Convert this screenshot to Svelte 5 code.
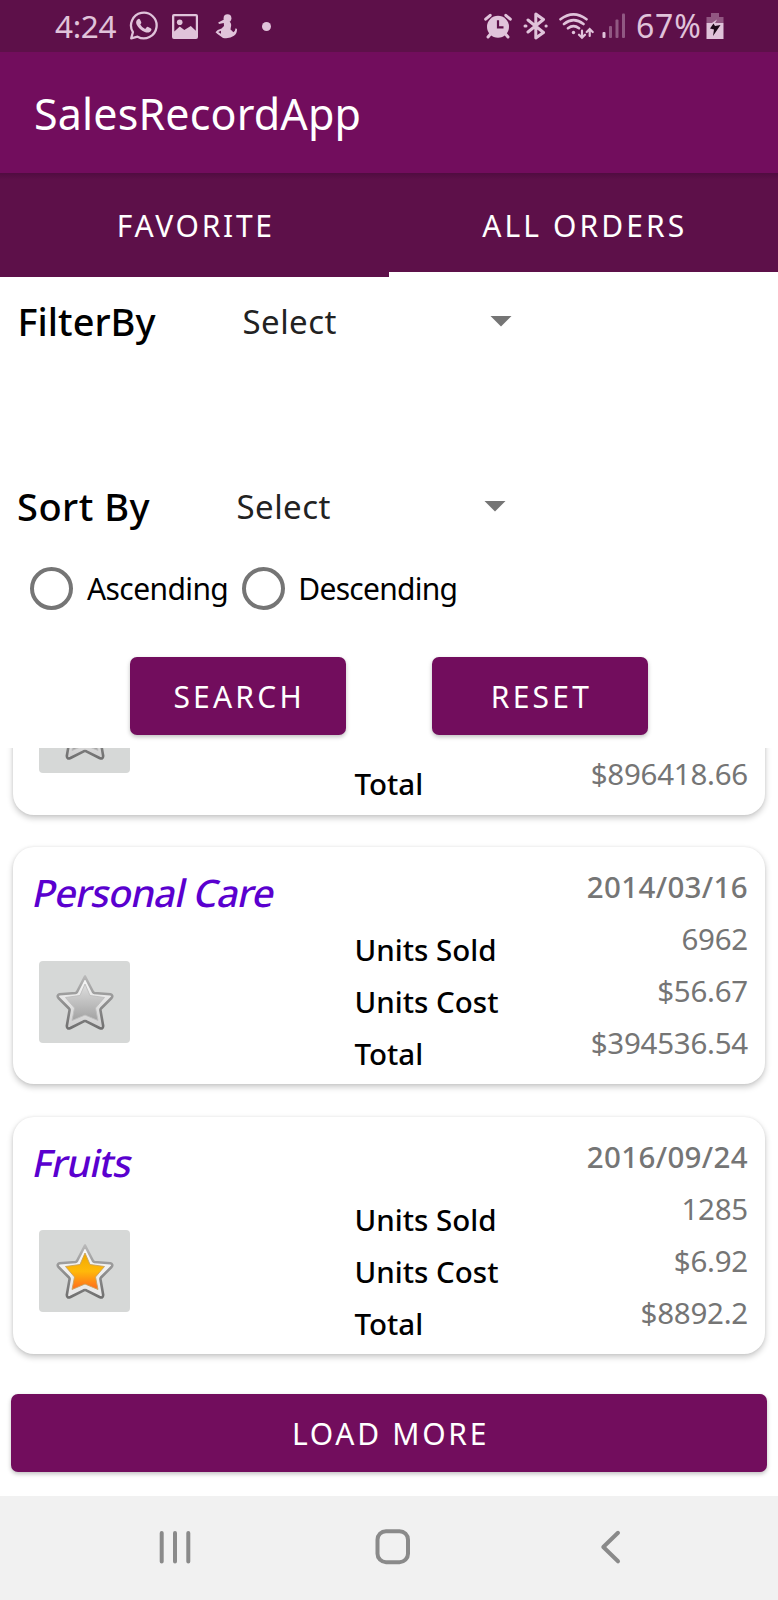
<script>
  const orders = [
    { name: '', date: '', sold: '', cost: '', total: '$896418.66', favorite: false },
    { name: 'Personal Care', date: '2014/03/16', sold: '6962', cost: '$56.67', total: '$394536.54', favorite: false },
    { name: 'Fruits', date: '2016/09/24', sold: '1285', cost: '$6.92', total: '$8892.2', favorite: true }
  ];
  const starOuter = 'M85 976.5 L93 992 Q93.600 992.800 94.500 993 L110.500 994.300 Q113.500 995.400 111.500 998 L101 1008.500 Q100.200 1009.500 100.500 1010.500 L103.200 1026 Q103 1029.500 99.500 1028 L86.300 1021.300 Q85 1020.700 83.700 1021.300 L70.500 1028 Q67 1029.500 66.800 1026 L69.500 1010.500 Q69.800 1009.500 69 1008.500 L58.500 998 Q56.500 995.400 59.500 994.300 L75.500 993 Q76.400 992.800 77 992 Z';
  const starInner = 'M85 984 L90 995.500 L104.500 997.500 L95.500 1008 L98 1020.500 L85 1015 L72 1020.500 L74.500 1008 L65.500 997.500 L80 995.500 Z';
</script>

<div class="screen">
  <header class="status">
    <div class="side">
      <span class="clock">4:24</span>
      <svg class="wa" width="30" height="30" viewBox="129 11 30 30" fill="none">
        <path d="M131.200 38.300 L132.900 32.200 A12.800 12.800 0 1 1 137.600 36.700 Z" stroke="currentColor" stroke-width="2.300" stroke-linejoin="round" />
        <path d="M137.500 19.500 q1.500-1.300 2.500 0 l1.300 2.700 q.3.900-1 2.300 q1.700 3.300 4.900 4.500 l1.700-1.900 q.5-.6 1.300-.2 l2.800 1.500 q.8.500.3 1.800 c-1 2.600-4 2.800-6.500 1.800 q-5.500-2.200-8.200-7.500 q-1.300-3.200.9-5z" fill="currentColor" />
      </svg>
      <svg class="pic" width="26" height="25" viewBox="172 13 26 25">
        <path fill="currentColor" fill-rule="evenodd" d="M174 13h22q2 0 2 2v21q0 2-2 2h-22q-2 0-2-2v-21q0-2 2-2zM174.300 15.200v15.300l5.500-5 4.500 3.500 6.500-4 5 4.700v-14.500z" />
        <circle cx="179.700" cy="21.200" r="2.800" fill="currentColor" />
      </svg>
      <svg class="person" width="24" height="26" viewBox="214 12 24 26" fill="currentColor">
        <circle cx="227.500" cy="17.200" r="3.900" />
        <path d="M218.200 21.500 L225 18 L229.500 20.500 Q232 22.500 230.800 26.500 L230.500 28.500 Q232.500 30 233.300 31.300 Q235.300 30 235.600 27.300 L237 28 Q237.200 32.500 234 34.800 Q230 38 223 37 L221 35.500 Q217.500 33.300 215.500 31.200 Q217 28.700 221.500 27.500 L224 25 L223.800 22 L219 23 Z" />
        <path d="M218.200 31 l2.800-1.300 v3.100z" fill="#5d1049" />
      </svg>
      <i class="dot"></i>
    </div>
    <div class="side right">
      <svg width="28" height="26" viewBox="484 12 28 26">
        <g fill="none" stroke="currentColor" stroke-width="3" stroke-linecap="round">
          <path d="M485.700 18.200 L490.200 14.300 M505.800 14.300 L510.300 18.200 M490.500 33 L488 36 M505.500 33 L508 36" />
        </g>
        <circle cx="498" cy="25.800" r="11" fill="currentColor" />
        <path d="M498 19.200 V26.300 H503.500" fill="none" stroke="#5d1049" stroke-width="2.200" />
      </svg>
      <svg class="bt" width="26" height="28" viewBox="523 11.500 26 28" fill="none" stroke="currentColor" stroke-width="3" stroke-linejoin="round" stroke-linecap="round">
        <path d="M528 19.500 L543.500 32 L535.800 37.500 V13.500 L543.500 19 L528 31.500" />
        <path d="M525 25.500 h1 M546 25.500 h.2" />
      </svg>
      <svg class="wifi" width="36" height="28" viewBox="558 11 36 28" fill="none" stroke="currentColor" stroke-width="2.600" stroke-linecap="round">
        <path d="M560.500 18.300 Q573.500 8.500 586.500 18.300 M564 23 Q573.500 15.300 583.500 23 M568 27.300 Q573.500 23 579 27.300" />
        <circle cx="573.500" cy="31.500" r="1.700" fill="currentColor" stroke="none" />
        <path d="M582 29.500 V36 M579 33.700 L582 36.700 L585 33.700 M589.700 35 V28.800 M586.700 31 L589.700 28 L592.700 31" stroke-width="2.200" />
      </svg>
      <svg class="signal" width="24" height="26" viewBox="602 13 24 26" fill="currentColor">
        <rect x="602.500" y="32" width="3" height="6" rx="1" />
        <g opacity=".4"><rect x="609" y="26" width="3" height="12" rx="1" /><rect x="615.500" y="19.500" width="3" height="18.500" rx="1" /><rect x="622" y="13.500" width="3" height="24.500" rx="1" /></g>
      </svg>
      <span class="pct">67%</span>
      <svg class="batt" width="18" height="27" viewBox="705.500 12 18 27">
        <path fill="currentColor" opacity=".4" d="M710.500 12h8v4h4.500v6h-17v-6h4.500z" />
        <path fill="currentColor" d="M706 22h17v16h-17z" />
        <path fill="currentColor" d="M716.500 18.500l-2.500 4.500h-4z" />
        <path fill="#1c0a18" d="M709.500 27.500 L713 22.500 L714.500 25 L720 24 L712.500 35 L713.500 28.500 Z" />
      </svg>
    </div>
  </header>

  <div class="toolbar"><h1>SalesRecordApp</h1></div>

  <nav class="tabs">
    <div class="tab"><span class="fav">FAVORITE</span></div>
    <div class="tab active"><span class="all">ALL ORDERS</span></div>
  </nav>

  <section class="field filter">
    <strong>FilterBy</strong><span>Select</span>
    <svg width="22" height="11" viewBox="0 0 22 11"><path d="M.5 0h21L11 10.500z" fill="#757575" /></svg>
  </section>
  <section class="field sort">
    <strong>Sort By</strong><span>Select</span>
    <svg width="22" height="11" viewBox="0 0 22 11"><path d="M.5 0h21L11 10.500z" fill="#757575" /></svg>
  </section>
  <section class="radios">
    <label><i></i><span>Ascending</span></label>
    <label><i></i><span class="desc">Descending</span></label>
  </section>
  <section class="actions">
    <button><span>SEARCH</span></button>
    <button><span>RESET</span></button>
  </section>

  <main class="list">
    {#each orders as order}
      <article class="card">
        <div class="left">
          <div class="name">{#if order.name}<h2>{order.name}</h2>{/if}</div>
          <div class="star">
            <svg width="62" height="60" viewBox="54 972 62 60">
              <defs>
                <linearGradient id="rim" x1="0" y1="0" x2="0" y2="1"><stop offset="0" stop-color="#b8b8b8" /><stop offset=".5" stop-color="#909090" /><stop offset="1" stop-color="#707070" /></linearGradient>
                <linearGradient id="edge-{order.favorite}" x1="0" y1="0" x2="0" y2="1"><stop offset="0" stop-color="#f8f8f8" /><stop offset="1" stop-color={order.favorite ? '#e6e6e6' : '#cfcfcf'} /></linearGradient>
                <linearGradient id="gold" x1="0" y1="0" x2="0" y2="1"><stop offset="0" stop-color="#f0a800" /><stop offset=".5" stop-color="#ffb90a" /><stop offset="1" stop-color="#ff6a1c" /></linearGradient>
                <linearGradient id="grey" x1="0" y1="0" x2="0" y2="1"><stop offset="0" stop-color="#dedede" /><stop offset="1" stop-color="#a2a2a2" /></linearGradient>
              </defs>
              <path d={starOuter} fill="url(#edge-{order.favorite})" stroke="url(#rim)" stroke-width="2.600" stroke-linejoin="round" />
              <path d={starInner} fill={order.favorite ? 'url(#gold)' : 'url(#grey)'} stroke={order.favorite ? '#c9a25a' : '#bdbdbd'} stroke-width=".9" stroke-linejoin="round" />
            </svg>
          </div>
        </div>
        <div class="labels">
          {#if order.sold}<span>Units Sold</span>{/if}
          {#if order.cost}<span>Units Cost</span>{/if}
          <span>Total</span>
        </div>
        <div class="values">
          {#if order.date}<b>{order.date}</b>{/if}
          {#if order.sold}<span>{order.sold}</span>{/if}
          {#if order.cost}<span>{order.cost}</span>{/if}
          <span>{order.total}</span>
        </div>
      </article>
    {/each}
  </main>

  <div class="more"><button><span>LOAD MORE</span></button></div>

  <footer class="navbar">
    <svg width="778" height="104" viewBox="0 1496 778 104" fill="none" stroke="#8a8a8a" stroke-width="4" stroke-linecap="round" stroke-linejoin="round">
      <path d="M161.700 1533 V1561.500 M175 1533 V1561.500 M188.300 1533 V1561.500" />
      <rect x="377.500" y="1531.200" width="30.500" height="31" rx="8.500" />
      <path d="M618 1532.800 L603.300 1547 L618 1561.300" />
    </svg>
  </footer>
</div>

<style>
  :global(body) { margin: 0; background: #fff; }
  .screen { width: 778px; height: 1600px; display: flex; flex-direction: column; overflow: hidden; background: #fff; color: #000; font-family: "Noto Sans", sans-serif; }
  .screen > * { flex: none; }
  svg { display: block; flex: none; }
  span, strong, b, h1, h2 { white-space: nowrap; }
  h1, h2 { margin: 0; }

  .status { height: 52px; display: flex; justify-content: space-between; background: #5d1049; color: #e0c3da; }
  .side { display: flex; align-items: center; padding-left: 55px; }
  .side.right { padding: 0 54.500px 0 0; }
  .clock, .pct { line-height: 52px; }
  .clock { font-size: 31.500px; width: 74px; letter-spacing: -.3px; }
  .pic { margin-left: 13px; }
  .person { margin-left: 16px; }
  .dot { width: 9px; height: 9px; border-radius: 50%; margin-left: 24px; background: currentColor; }
  .bt { margin-left: 11px; }
  .wifi { margin-left: 9px; }
  .signal { margin-left: 8px; }
  .pct { font-size: 32px; width: 69px; margin-left: 10px; letter-spacing: .8px; }
  .batt { margin-left: .5px; }

  .toolbar { height: 121px; box-sizing: border-box; padding: 2px 0 0 34px; background: #720d5d; display: flex; align-items: center; }
  h1 { color: #fff; font-size: 43px; font-weight: 400; line-height: 60px; letter-spacing: .15px; }

  .tabs { height: 104px; display: grid; grid-template-columns: 389px 389px; background: linear-gradient(#500c40, #5d1049 7px); }
  .tab { box-sizing: border-box; display: flex; justify-content: center; align-items: center; padding-left: 2.500px; color: #fff; font-size: 30px; height: 104px; }
  .tab.active { border-bottom: 5px solid #fff; padding-top: 5px; }
  .fav { letter-spacing: 2.700px; }
  .all { letter-spacing: 3.100px; }

  .field { height: 88px; display: flex; align-items: center; }
  .sort { margin-top: 97px; }
  .field strong { box-sizing: border-box; font-size: 38px; font-weight: 500; }
  .field span { font-size: 33px; color: #222; width: 247.500px; letter-spacing: .45px; }
  .filter strong { width: 242.500px; padding-left: 17.500px; }
  .sort strong { width: 236.500px; padding-left: 17px; letter-spacing: .5px; }

  .radios { height: 76px; display: flex; align-items: center; padding: 1px 0 0 30px; box-sizing: border-box; }
  .radios label { display: flex; align-items: center; font-size: 30px; letter-spacing: -.6px; width: 212px; }
  .radios i { box-sizing: border-box; width: 43px; height: 43px; border: 4.500px solid #757575; border-radius: 50%; margin-right: 14px; flex: none; }
  .radios .desc { margin-left: -.7px; letter-spacing: -.72px; }

  button { box-sizing: border-box; display: flex; align-items: center; justify-content: center; padding: 0 0 0 3px; border: 0; border-radius: 7px; background: #720d5d; color: #fff; font: 400 30px "Noto Sans", sans-serif; letter-spacing: 2.700px; box-shadow: 0 2px 4px rgba(0, 0, 0, .25); }
  .actions { height: 122px; box-sizing: border-box; padding: 31.300px 0 0 129.500px; display: flex; gap: 86px; }
  .actions button { width: 216.300px; height: 77.700px; letter-spacing: 3.200px; }

  .list { height: 630px; box-sizing: border-box; padding: 0 13px 24px; display: flex; flex-direction: column; justify-content: flex-end; gap: 32.700px; overflow: hidden; }
  .card { flex: none; box-sizing: border-box; height: 237px; display: grid; grid-template-columns: 341.500px 1fr auto; border-radius: 21px; background: #fff; padding-right: 17px; box-shadow: 0 3px 6px rgba(0, 0, 0, .22), 0 0 3px rgba(0, 0, 0, .07); }
  .left { padding-top: 19px; }
  .name { height: 52px; padding-left: 20.500px; }
  h2 { width: fit-content; font-size: 38px; font-weight: 500; line-height: 52px; letter-spacing: -.8px; color: #5a00cf; transform: skewX(-12deg); }
  .star { width: 91px; height: 82px; margin: 42.300px 0 0 26px; border-radius: 4px; background: #d6d8d7; display: flex; align-items: center; justify-content: center; }
  .labels, .values { box-sizing: border-box; height: 237px; display: flex; flex-direction: column; justify-content: flex-end; font-size: 29.500px; line-height: 52px; }
  .labels { padding-bottom: 4.300px; font-weight: 500; }
  .values { padding-bottom: 15px; align-items: flex-end; color: #757575; letter-spacing: -.25px; }
  .values b { font-weight: 500; letter-spacing: .35px; }

  .more { height: 118px; box-sizing: border-box; padding: 16.300px 11px 0; }
  .more button { width: 756px; height: 78px; }

  .navbar { height: 104px; background: #f1f1f1; }
</style>
